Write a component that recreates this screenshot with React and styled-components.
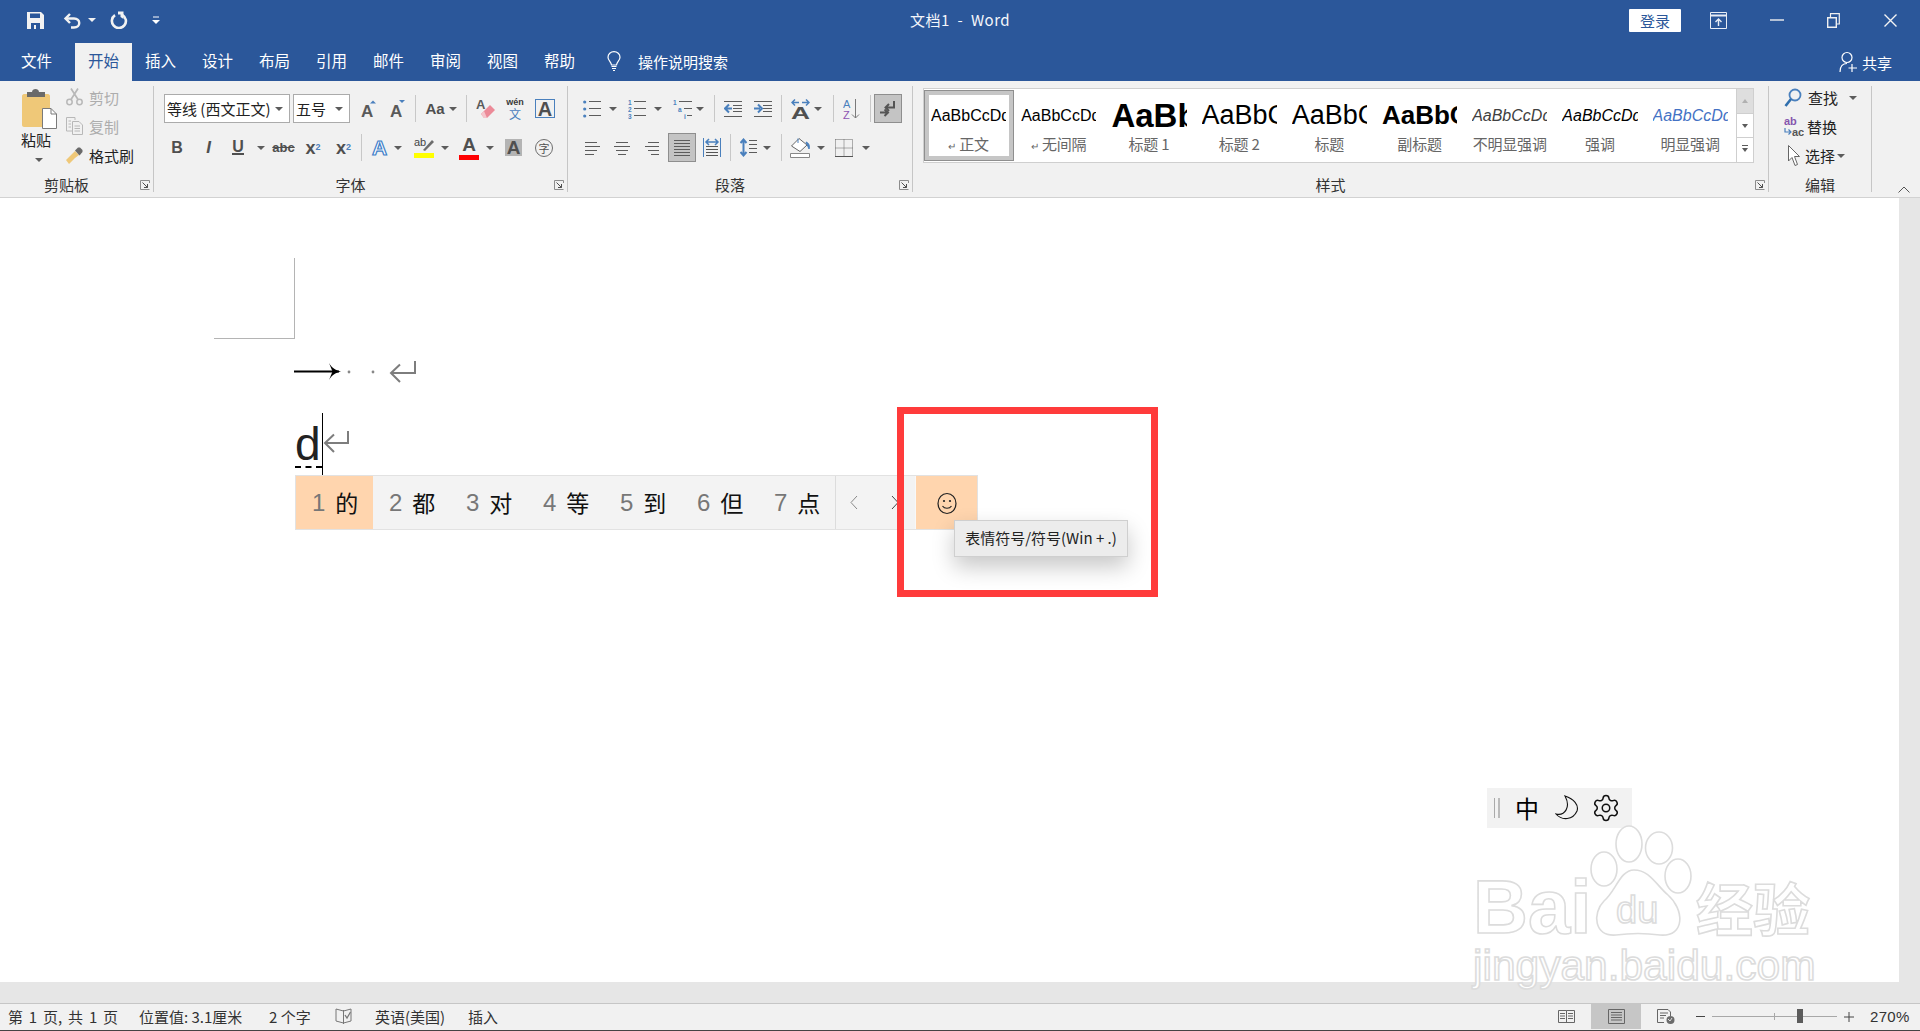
import React from 'react';
import styled, { createGlobalStyle } from 'styled-components';
import { Settings } from 'lucide-react';

const CJK = '"Noto Sans CJK SC", "Liberation Sans", sans-serif';
const LATIN = '"Liberation Sans", "Noto Sans CJK SC", sans-serif';
const BLUE = '#2b579a';
const ICON_BLUE = '#4a80bd';
const GRAY = '#5c5c5c';

const GlobalStyle = createGlobalStyle`
  html, body { margin: 0; padding: 0; height: 100%; overflow: hidden; background: #fff; }
  body { font-family: ${CJK}; }
  svg { display: block; }
`;

const Shell = styled.div`
  position: relative;
  width: 1920px;
  height: 1031px;
  display: flex;
  flex-direction: column;
  overflow: hidden;
`;

/* title bar */
const TitleBar = styled.div`
  height: 40px;
  box-sizing: border-box;
  background: ${BLUE};
  display: grid;
  grid-template-columns: 1fr auto 1fr;
  align-items: center;
  color: #fff;
`;
const Qat = styled.div`
  display: flex;
  align-items: center;
  padding-left: 27px;
`;
const WindowTitle = styled.div`
  margin-bottom: 2px;
  font-size: 15px;
  letter-spacing: 0.5px;
  color: #f4f6fa;
  white-space: pre;
`;
const WinButtons = styled.div`
  display: flex;
  align-items: center;
  justify-content: flex-end;
  padding-right: 23px;
`;
const SignIn = styled.div`
  width: 52px;
  height: 23px;
  margin-right: 29px;
  background: #fff;
  border-radius: 1px;
  color: ${BLUE};
  font-size: 15px;
  line-height: 23px;
  text-align: center;
`;
const Gap = styled.div`
  margin-left: ${p => p.$ml || 0}px;
  display: flex;
`;

/* tabs */
const TabBar = styled.div`
  height: 41px;
  background: ${BLUE};
  display: flex;
  align-items: flex-end;
  padding-left: 8px;
  color: #fff;
`;
const Tab = styled.div`
  width: 57px;
  height: 38px;
  margin-right: ${p => p.$mr || 0}px;
  line-height: 35px;
  text-align: center;
  font-size: 15.5px;
  background: ${p => (p.$active ? '#f1f1f1' : 'transparent')};
  color: ${p => (p.$active ? BLUE : '#fff')};
`;
const TellMe = styled.div`
  height: 36px;
  margin-bottom: 2px;
  display: flex;
  align-items: center;
  gap: 17px;
  margin-left: 19px;
  font-size: 15px;
`;
const Share = styled.div`
  height: 38px;
  margin-left: auto;
  margin-right: 28px;
  display: flex;
  align-items: center;
  gap: 4px;
  font-size: 15px;
`;

/* ribbon */
const Ribbon = styled.div`
  position: relative;
  height: 117px;
  box-sizing: border-box;
  background: #f1f1f1;
  border-bottom: 1px solid #d2d2d2;
  display: flex;
  align-items: flex-start;
`;
const Group = styled.div`
  position: relative;
  width: ${p => p.$w}px;
  height: 106px;
  margin-top: 5px;
  box-sizing: border-box;
  border-right: 1px solid #c6c6c6;
  display: flex;
  flex-direction: column;
  justify-content: space-between;
`;
const GroupLabel = styled.div`
  height: 14px;
  line-height: 14px;
  padding-right: ${p => (p.$flat ? 0 : 20)}px;
  text-align: center;
  font-size: 15px;
  color: #333;
`;
const Launcher = styled.div`
  position: absolute;
  right: 3px;
  bottom: 2px;
`;
const ToolRows = styled.div`
  display: flex;
  flex-direction: column;
  gap: 10px;
  padding-top: 8px;
`;
const ToolRow = styled.div`
  height: 29px;
  display: flex;
  align-items: center;
  padding-left: ${p => p.$pl}px;
`;
const Tool = styled.div`
  flex: none;
  width: ${p => p.$w}px;
  margin-left: ${p => p.$ml || 0}px;
  display: flex;
  align-items: center;
  justify-content: center;
  color: ${p => p.$color || '#4f4f4f'};
  font-family: ${LATIN};
  font-size: ${p => p.$fs || 18}px;
  font-weight: ${p => (p.$bold ? 700 : 400)};
  font-style: ${p => (p.$italic ? 'italic' : 'normal')};
  line-height: 1;
`;
const ActiveTool = styled(Tool)`
  height: 29px;
  box-sizing: border-box;
  background: #c4c4c4;
  border: 1px solid #8e8e8e;
`;
const Caret = styled.span`
  flex: none;
  width: 0;
  height: 0;
  margin-left: ${p => p.$ml || 0}px;
  border-left: 4px solid transparent;
  border-right: 4px solid transparent;
  border-top: 4px solid ${p => p.$color || GRAY};
`;
const Sep = styled.span`
  flex: none;
  width: 1px;
  height: 27px;
  margin-left: ${p => p.$ml || 0}px;
  background: #c8c8c8;
`;
const ComboBox = styled.div`
  flex: none;
  width: ${p => p.$w}px;
  height: 29px;
  margin-left: ${p => p.$ml || 0}px;
  box-sizing: border-box;
  border: 1px solid #ababab;
  background: #fff;
  display: flex;
  align-items: center;
  justify-content: space-between;
  padding: 0 6px 0 2px;
  font-size: 15px;
  color: #222;
  white-space: nowrap;
`;
const UnderU = styled.span`
  border-bottom: 2px solid #4f4f4f;
  line-height: 13px;
`;
const ColorBar = styled.div`
  display: flex;
  flex-direction: column;
  align-items: center;
  width: 100%;
`;
const Swatch = styled.span`
  width: 100%;
  height: 5px;
  margin-top: 1px;
  background: ${p => p.$color};
`;
const Shaded = styled.span`
  width: 17px;
  height: 17px;
  background: #b4b4b4;
  font-size: 19px;
  font-weight: 700;
  line-height: 18px;
  text-align: center;
`;
const BoxedA = styled.span`
  width: 18px;
  height: 17px;
  border: 1px solid ${ICON_BLUE};
  font-size: 20px;
  line-height: 18px;
  font-weight: 700;
  text-align: center;
`;
const SmallSub = styled.sub`
  font-size: 9px;
  color: ${ICON_BLUE};
  vertical-align: -3px;
`;
const SmallSup = styled.sup`
  font-size: 9px;
  color: ${ICON_BLUE};
  vertical-align: 7px;
`;
const Strike = styled.span`
  text-decoration: line-through;
  font-size: 13px;
  font-weight: 700;
`;
const CircleChar = styled.span`
  width: 16px;
  height: 16px;
  border: 1px solid #6e6e6e;
  border-radius: 50%;
  font-family: ${CJK};
  font-size: 11px;
  line-height: 16px;
  text-align: center;
`;
const Wen = styled.div`
  display: flex;
  flex-direction: column;
  align-items: center;
  font-size: 9px;
  color: #3a3a3a;
  line-height: 9px;
  font-weight: 700;
`;
const WenChar = styled.span`
  font-family: ${CJK};
  font-size: 12px;
  line-height: 13px;
  font-weight: 400;
  color: ${ICON_BLUE};
`;

/* clipboard */
const ClipBody = styled.div`
  display: flex;
  padding-left: 21px;
`;
const PasteColumn = styled.div`
  width: 36px;
  padding-top: 3px;
  display: flex;
  flex-direction: column;
  align-items: center;
  font-size: 15px;
  color: #222;
`;
const PasteLabel = styled.span`
  line-height: 15px;
  margin: 3px 6px 11px 0;
`;
const ClipList = styled.div`
  margin-left: 9px;
  padding-top: 2px;
  display: flex;
  flex-direction: column;
  gap: 11px;
`;
const ClipItem = styled.div`
  height: 18px;
  display: flex;
  align-items: center;
  gap: 6px;
  font-size: 15px;
  color: ${p => (p.$disabled ? '#adadad' : '#222')};
  white-space: nowrap;
`;

/* styles gallery */
const Gallery = styled.div`
  margin: 2px 0 0 10px;
  width: 831px;
  height: 75px;
  box-sizing: border-box;
  border: 1px solid #cfcfcf;
  background: #fff;
  display: flex;
`;
const StyleItem = styled.div`
  flex: none;
  width: 90.2px;
  height: 71px;
  margin-top: 1px;
  box-sizing: border-box;
  overflow: hidden;
  border: ${p => (p.$selected ? '1px solid #8f8f8f' : '0')};
  box-shadow: ${p => (p.$selected ? 'inset 0 0 0 4px #c6c6c6' : 'none')};
  padding: ${p => (p.$selected ? '0 7px 0 6px' : '1px 8px 0 7px')};
  display: flex;
  flex-direction: column;
`;
const Sample = styled.div`
  height: 49px;
  flex: none;
  line-height: 49px;
  overflow: hidden;
  white-space: nowrap;
  font-family: ${LATIN};
  font-size: ${p => p.$size}px;
  font-weight: ${p => (p.$bold ? 700 : 400)};
  font-style: ${p => (p.$italic ? 'italic' : 'normal')};
  color: ${p => p.$color || '#000'};
`;
const StyleLabel = styled.div`
  height: 18px;
  margin-top: -5px;
  line-height: 18px;
  text-align: center;
  font-size: 15px;
  letter-spacing: -0.2px;
  color: #666;
  white-space: nowrap;
`;
const ReturnSmall = styled.span`
  font-size: 10px;
  margin-right: 3px;
`;
const GalleryScroll = styled.div`
  margin-left: auto;
  width: 18px;
  display: flex;
  flex-direction: column;
  border-left: 1px solid #cfcfcf;
`;
const ScrollBtn = styled.div`
  flex: 1;
  display: flex;
  align-items: center;
  justify-content: center;
  background: ${p => (p.$off ? '#dedede' : '#fff')};
  border-bottom: ${p => (p.$last ? '0' : '1px solid #cfcfcf')};
`;
const UpCaret = styled.span`
  border-left: 3px solid transparent;
  border-right: 3px solid transparent;
  border-bottom: 4px solid #b0b0b0;
`;
const DownCaret = styled.span`
  border-left: 3px solid transparent;
  border-right: 3px solid transparent;
  border-top: 4px solid ${GRAY};
`;
const MoreCaret = styled(DownCaret)`
  position: relative;
  &::before {
    content: '';
    position: absolute;
    left: -3px;
    top: -7px;
    width: 6px;
    height: 1px;
    background: ${GRAY};
  }
`;

/* editing */
const EditList = styled.div`
  padding: 2px 0 0 15px;
  display: flex;
  flex-direction: column;
  gap: 10px;
`;
const EditItem = styled.div`
  height: 19px;
  display: flex;
  align-items: center;
  gap: ${p => p.$gap || 6}px;
  font-size: 15px;
  color: #222;
  white-space: nowrap;
`;
const Collapse = styled.div`
  position: absolute;
  right: 10px;
  bottom: 4px;
`;

/* document */
const DocArea = styled.div`
  flex: 1;
  display: flex;
  min-height: 0;
`;
const DocPage = styled.div`
  position: relative;
  flex: 1;
  background: #fff;
  padding: 60px 0 0 214px;
`;
const ScrollTrack = styled.div`
  width: 21px;
  background: #e6e6e6;
`;
const CornerMark = styled.div`
  width: 80px;
  height: 80px;
  border-right: 1px solid #b4b4b4;
  border-bottom: 1px solid #b4b4b4;
`;
const MarksLine = styled.div`
  margin: 21px 0 0 80px;
  height: 22px;
`;
const TypingLine = styled.div`
  margin: 31px 0 0 81px;
  height: 62px;
  display: flex;
  align-items: flex-start;
`;
const Composition = styled.div`
  width: 27px;
  height: 53px;
  border-bottom: 2px dashed #000;
  font-family: ${LATIN};
  font-size: 46px;
  line-height: 62px;
  color: #222;
`;
const TextCursor = styled.div`
  width: 1px;
  height: 62px;
  background: #000;
`;
const ReturnMark = styled.div`
  margin-top: 17px;
`;
const CandidateBar = styled.div`
  position: relative;
  margin-left: 81px;
  width: 683px;
  height: 55px;
  box-sizing: border-box;
  background: #f3f3f3;
  border: 1px solid #e2e2e2;
  display: flex;
`;
const Candidate = styled.div`
  width: 77px;
  box-sizing: border-box;
  padding-left: 16px;
  display: flex;
  align-items: center;
  gap: 10px;
  font-size: 23px;
  color: #111;
  background: ${p => (p.$active ? '#ffd5ae' : 'transparent')};
`;
const CandNum = styled.span`
  font-family: ${LATIN};
  font-size: 24px;
  color: #777;
`;
const CandChar = styled.span`
  margin-top: -2px;
`;
const PagerCell = styled.div`
  width: 81px;
  box-sizing: border-box;
  border-left: 1px solid #dcdcdc;
  border-right: 1px solid #f8f8f8;
  padding: 0 16px 0 14px;
  display: flex;
  align-items: center;
  justify-content: space-between;
`;
const EmojiCell = styled.div`
  position: relative;
  flex: 1;
  padding-top: 1px;
  background: #ffd5ae;
  display: flex;
  align-items: center;
  justify-content: center;
`;
const Tooltip = styled.div`
  position: absolute;
  left: 38px;
  top: 44px;
  width: 174px;
  height: 37px;
  box-sizing: border-box;
  background: #ececec;
  border: 1px solid #cfcfcf;
  box-shadow: 0 10px 22px rgba(0, 0, 0, 0.22);
  font-size: 15px;
  line-height: 33px;
  text-align: center;
  color: #222;
  white-space: nowrap;
  z-index: 3;
`;
const RedBox = styled.div`
  position: absolute;
  left: 897px;
  top: 209px;
  width: 261px;
  height: 190px;
  box-sizing: border-box;
  border: 7px solid #ff3b3b;
  pointer-events: none;
  z-index: 2;
`;
const ImeBar = styled.div`
  position: absolute;
  left: 1487px;
  top: 590px;
  width: 145px;
  height: 40px;
  background: #f2f2f2;
  display: flex;
  align-items: center;
  padding-left: 7px;
  box-sizing: border-box;
`;
const ImeGrip = styled.div`
  width: 3px;
  height: 20px;
  border-left: 1px solid #aaa;
  border-right: 2px solid #bbb;
`;
const ImeChar = styled.div`
  margin-left: 15px;
  font-size: 24px;
  line-height: 40px;
  color: #000;
`;
const ImeIcon = styled.div`
  margin-left: ${p => p.$ml}px;
`;
const Watermark = styled.svg`
  position: absolute;
  left: 1470px;
  top: 825px;
  pointer-events: none;
`;
const WmText = styled.text`
  fill: #fff;
  stroke: #dcdcdc;
  stroke-width: 1.6px;
`;

/* bottom */
const BottomStrip = styled.div`
  height: 21px;
  background: #e6e6e6;
`;
const StatusBar = styled.div`
  height: 28px;
  box-sizing: border-box;
  background: #f1f1f1;
  border-top: 1px solid #c6c6c6;
  border-bottom: 1px solid #444;
  display: flex;
  align-items: center;
  padding: 0 0 1px 8px;
  font-size: 15px;
  color: #333;
  white-space: nowrap;
`;
const StatusItem = styled.span`
  width: ${p => p.$w}px;
  flex: none;
  word-spacing: ${p => p.$ws || 0}px;
`;
const StatusRight = styled.div`
  margin-left: auto;
  height: 100%;
  display: flex;
  align-items: center;
`;
const ViewBtn = styled.div`
  width: 50px;
  height: 100%;
  display: flex;
  align-items: center;
  justify-content: center;
  background: ${p => (p.$active ? '#c6c6c6' : 'transparent')};
`;
const Zoom = styled.div`
  display: flex;
  align-items: center;
  margin-left: 5px;
`;
const ZoomTrack = styled.div`
  position: relative;
  width: 125px;
  height: 1px;
  margin: 0 7px;
  background: #a8a8a8;
`;
const ZoomTick = styled.span`
  position: absolute;
  left: 62px;
  top: -3px;
  width: 1px;
  height: 7px;
  background: #a8a8a8;
`;
const ZoomThumb = styled.span`
  position: absolute;
  left: 85px;
  top: -7px;
  width: 6px;
  height: 14px;
  background: #5c5c5c;
`;
const ZoomPct = styled.span`
  width: 50px;
  margin-left: 16px;
  font-family: ${LATIN};
  font-size: 15px;
  letter-spacing: 0.3px;
`;

/* small drawings */
const Svg = ({ w, h, children, ...rest }) => (
  <svg width={w} height={h} viewBox={`0 0 ${w} ${h}`} fill="none" {...rest}>{children}</svg>
);

const Lines = ({ rows, x1, x2, color = GRAY }) => rows.map(y => (
  <path key={y} d={`M${x1} ${y}.5H${x2}`} stroke={color} />
));

const SaveIcon = () => (
  <Svg w={17} h={17}>
    <path d="M0 0H14L17 3V17H0Z" fill="#f2f2f2" />
    <path d="M3 1.5H13V6H3Z" fill={BLUE} />
    <path d="M4 11H13V17H4Z" fill={BLUE} />
    <path d="M7 13H9V17H7Z" fill="#f2f2f2" />
  </Svg>
);
const UndoIcon = () => (
  <Svg w={18} h={17}>
    <path d="M7 2L2.5 6.5L7 11" stroke="#f2f2f2" strokeWidth="2.4" />
    <path d="M3 6.5H11C18 6.5 18 15.5 11 15.5H8" stroke="#f2f2f2" strokeWidth="2.4" />
  </Svg>
);
const RedoIcon = () => (
  <Svg w={18} h={18}>
    <path d="M5 4.2A7 7 0 1 0 12.5 4" stroke="#f2f2f2" strokeWidth="2.6" />
    <path d="M8 0.5H13.5V8L10.5 6V3.5H8Z" fill="#f2f2f2" />
  </Svg>
);
const QatMore = () => (
  <Svg w={8} h={9}>
    <path d="M1 1H7" stroke="#fff" />
    <path d="M0 4H8L4 8Z" fill="#fff" />
  </Svg>
);
const RibbonDisplay = () => (
  <Svg w={17} h={17}>
    <path d="M.5 .5H16.5V16.5H.5Z" stroke="#e8edf5" />
    <path d="M0 3.5H17" stroke="#e8edf5" strokeWidth="2" />
    <path d="M8.5 14V7M5.5 10L8.5 7L11.5 10" stroke="#e8edf5" strokeWidth="1.4" />
  </Svg>
);
const MinIcon = () => <Svg w={14} h={2}><path d="M0 1H14" stroke="#f0f0f0" strokeWidth="1.4" /></Svg>;
const RestoreIcon = () => (
  <Svg w={13} h={15}>
    <path d="M.7 4.7H9.3V14.3H.7Z" stroke="#f0f0f0" strokeWidth="1.4" />
    <path d="M3.5 4V.7H12.3V11H9.5" stroke="#f0f0f0" strokeWidth="1.2" />
  </Svg>
);
const CloseIcon = () => (
  <Svg w={13} h={13}><path d="M.5 .5L12.5 12.5M12.5 .5L.5 12.5" stroke="#f4f4f4" strokeWidth="1.4" /></Svg>
);
const BulbIcon = () => (
  <Svg w={14} h={20}>
    <path d="M4.5 14C4 10.5 1 9.5 1 6.2A6 5.5 0 0 1 13 6.2C13 9.5 10 10.5 9.5 14Z" stroke="#fff" strokeWidth="1.2" />
    <path d="M4.5 15.5H9.5M5 17.5H9M6 19.5H8" stroke="#fff" />
  </Svg>
);
const PersonPlus = () => (
  <Svg w={19} h={22}>
    <circle cx="8" cy="6.5" r="5" stroke="#fff" strokeWidth="1.2" />
    <path d="M1 21C1 15 4 12.5 8 12.5" stroke="#fff" strokeWidth="1.2" />
    <path d="M13 13V21M9.5 17H18" stroke="#fff" strokeWidth="1.2" />
  </Svg>
);
const PasteIcon = () => (
  <Svg w={35} h={40}>
    <path d="M2 5H26C27 5 28 6 28 7V36C28 37 27 38 26 38H2C1 38 0 37 0 36V7C0 6 1 5 2 5Z" fill="#efc878" />
    <path d="M5 3H10C10 -1 17 -1 17 3H23V8H5Z" fill="#6a6a6a" />
    <path d="M20.5 19.5H29L34.5 25V39.5H20.5Z" fill="#fff" stroke="#7a7a7a" />
    <path d="M29 19.5V25H34.5" stroke="#7a7a7a" />
  </Svg>
);
const CutIcon = () => (
  <Svg w={17} h={18}>
    <circle cx="3.5" cy="14" r="2.7" stroke="#b8b8b8" strokeWidth="1.5" />
    <circle cx="13.5" cy="14" r="2.7" stroke="#b8b8b8" strokeWidth="1.5" />
    <path d="M5 11.5L12 .5M12 11.5L5 .5" stroke="#b8b8b8" strokeWidth="1.7" />
  </Svg>
);
const CopyIcon = () => (
  <Svg w={17} h={18}>
    <path d="M.5 .5H9V3M.5 .5V14H6" stroke="#b8b8b8" />
    <path d="M6.5 4.5H13L16.5 8V17.5H6.5Z" stroke="#b8b8b8" fill="#f1f1f1" />
    <path d="M8.5 9H14M8.5 11.5H14M8.5 14H14M2.5 4H5M2.5 7H5M2.5 10H5" stroke="#b8b8b8" />
  </Svg>
);
const BrushIcon = () => (
  <Svg w={17} h={17}>
    <path d="M9 4L13 8L9 11L3 17L0 13Z" fill="#efc878" />
    <path d="M9 3.5L12 .5H14L16.5 3V5L13.5 8.5Z" fill="#6a6a6a" />
  </Svg>
);
const LauncherIcon = () => (
  <Svg w={10} h={10}>
    <path d="M9.5 9.5H.5V.5H9.5V3" stroke="#8c8c8c" />
    <path d="M2.5 2.5L7.5 7.5M4 7.5H7.5V4" stroke="#4e4e4e" />
  </Svg>
);
const GrowA = ({ down }) => (
  <Svg w={15} h={18}>
    <text x="0" y="17" fontFamily="Liberation Sans" fontSize="17" fontWeight="700" fill="#5a5a5a">A</text>
    <path d={down ? 'M9 0H15L12 3Z' : 'M9 3.5H15L12 .5Z'} fill={ICON_BLUE} />
  </Svg>
);
const EraserIcon = () => (
  <Svg w={20} h={22}>
    <text x="0" y="11" fontFamily="Liberation Sans" fontSize="13" fontWeight="700" fill="#5a5a5a">A</text>
    <path d="M5 16L14 7L19 12L11 20H8Z" fill="#ec8a98" />
    <path d="M5 16L8 20H11L8 13Z" fill="#f5c5cc" />
  </Svg>
);
const TextEffectA = () => (
  <Svg w={18} h={22}>
    <text x="1" y="18" fontFamily="Liberation Sans" fontSize="21" fontWeight="700" fill="#fff" stroke="#3f80c9" strokeWidth="1.2">A</text>
  </Svg>
);
const HighlightPen = () => (
  <Svg w={20} h={15}>
    <text x="0" y="9" fontFamily="Liberation Sans" fontSize="11" fill="#444">ab</text>
    <path d="M9 13L18 3L20 5L11 14Z" fill="#6d6d6d" />
  </Svg>
);
const BulletList = () => (
  <Svg w={18} h={18}>
    {[2, 9, 16].map(y => <circle key={y} cx="1.7" cy={y} r="1.6" fill={ICON_BLUE} />)}
    <Lines rows={[1, 8, 15]} x1={6} x2={18} />
  </Svg>
);
const NumList = () => (
  <Svg w={18} h={20}>
    {['1', '2', '3'].map((n, i) => (
      <text key={n} x="0" y={6 + i * 7} fontFamily="Liberation Sans" fontSize="6.5" fontWeight="700" fill={ICON_BLUE}>{n}</text>
    ))}
    <Lines rows={[2, 9, 16]} x1={6} x2={18} />
  </Svg>
);
const MultiList = () => (
  <Svg w={19} h={20}>
    <text x="0" y="6" fontFamily="Liberation Sans" fontSize="6.5" fontWeight="700" fill={ICON_BLUE}>1</text>
    <text x="5" y="13" fontFamily="Liberation Sans" fontSize="6.5" fontWeight="700" fill={ICON_BLUE}>a</text>
    <text x="11" y="20" fontFamily="Liberation Sans" fontSize="6.5" fontWeight="700" fill={ICON_BLUE}>i</text>
    <path d="M6 2.5H19M11 9.5H19M14 16.5H19" stroke={GRAY} />
  </Svg>
);
const IndentIcon = ({ right }) => (
  <Svg w={18} h={16}>
    <Lines rows={[0, 15]} x1={0} x2={18} />
    <Lines rows={[4, 7, 10]} x1={9} x2={18} />
    <path d={right ? 'M0 7.5H6M4 3.5L8 7.5L4 11.5' : 'M8 7.5H2M5 3.5L1 7.5L5 11.5'} stroke={ICON_BLUE} strokeWidth="2" />
  </Svg>
);
const DirectionA = () => (
  <Svg w={19} h={20}>
    <path d="M1 3.5H8M4 .5L1 3.5L4 6.5M11 3.5H18M15 .5L18 3.5L15 6.5" stroke={ICON_BLUE} strokeWidth="1.5" />
    <text x="0" y="19.5" fontFamily="Liberation Sans" fontSize="17" fontWeight="700" fill="#505050" textLength="19" lengthAdjust="spacingAndGlyphs">A</text>
  </Svg>
);
const SortIcon = () => (
  <Svg w={17} h={20}>
    <text x="0" y="9" fontFamily="Liberation Sans" fontSize="11" fill={ICON_BLUE}>A</text>
    <text x="0" y="20" fontFamily="Liberation Sans" fontSize="11" fill="#8d55b3">Z</text>
    <path d="M12.5 0V19M9 15.5L12.5 19L16 15.5" stroke="#7a7a7a" />
  </Svg>
);
const PilcrowIcon = () => (
  <Svg w={16} h={16}>
    <path d="M14 0V6.5H6M9 3L5.5 6.5L9 10" stroke="#555" strokeWidth="2" />
    <path d="M0 11.5H7M4.5 8.5L8 11.5L4.5 15" stroke="#555" strokeWidth="2" />
  </Svg>
);
const AlignIcon = ({ kind, w }) => {
  const rows = kind === 'center'
    ? [[2, 14], [0, 16], [2, 14], [4, 12]]
    : kind === 'right'
      ? [[3, 14], [0, 14], [3, 14], [6, 14]]
      : [[0, 12], [0, 15], [0, 12], [0, 9]];
  return (
    <Svg w={w} h={14}>
      {rows.map(([a, b], i) => <path key={i} d={`M${a} ${i * 4 + 1}.5H${b}`} stroke={GRAY} />)}
    </Svg>
  );
};
const JustifyIcon = () => (
  <Svg w={16} h={16}><Lines rows={[0, 3, 6, 9, 12, 15]} x1={0} x2={16} /></Svg>
);
const DistributeIcon = () => (
  <Svg w={18} h={19}>
    <path d="M.5 0V19M17.5 0V19" stroke={ICON_BLUE} />
    <path d="M3 4H15M6 1L3 4L6 7M12 1L15 4L12 7" stroke={ICON_BLUE} strokeWidth="1.5" />
    <Lines rows={[8, 11, 14, 17]} x1={3} x2={15} color="#555" />
  </Svg>
);
const LineSpacing = () => (
  <Svg w={17} h={19}>
    <path d="M3.5 2V17M.5 5L3.5 1.5L6.5 5M.5 14L3.5 17.5L6.5 14" stroke={ICON_BLUE} strokeWidth="2" />
    <Lines rows={[2, 6, 10, 14]} x1={9} x2={17} />
  </Svg>
);
const ShadingIcon = () => (
  <Svg w={20} h={20}>
    <path d="M9 .5L17 7L10 13.5L1.5 8Z" fill="#fff" stroke="#666" />
    <path d="M8 .5V5M16 4C19 5 20 8 19 11Z" stroke={ICON_BLUE} fill={ICON_BLUE} />
    <path d="M.5 15.5H19.5V19.5H.5Z" fill="#fff" stroke="#888" />
  </Svg>
);
const BorderIcon = () => (
  <Svg w={18} h={18}>
    <path d="M.5 .5H17.5V17M.5 .5V17M9 .5V17M.5 9H17.5" stroke="#666" strokeDasharray="1 1" />
    <path d="M0 17.5H18" stroke="#555" />
  </Svg>
);
const FindIcon = () => (
  <Svg w={18} h={20}>
    <circle cx="11" cy="7" r="5.5" stroke={ICON_BLUE} strokeWidth="1.8" />
    <path d="M7 11L1.5 18" stroke="#2f6fad" strokeWidth="2.6" />
  </Svg>
);
const ReplaceIcon = () => (
  <Svg w={20} h={21}>
    <text x="0" y="9" fontFamily="Liberation Sans" fontSize="11" fontWeight="700" fill="#8556ad">ab</text>
    <text x="8" y="20" fontFamily="Liberation Sans" fontSize="11" fontWeight="700" fill="#555">ac</text>
    <path d="M1 12V16H7M4.5 13.5L7 16L4.5 18.5" stroke={ICON_BLUE} strokeWidth="1.2" />
  </Svg>
);
const SelectIcon = () => (
  <Svg w={12} h={21}>
    <path d="M.5 .5V16L4 12.5L7 20.5L9.5 19.5L6.5 11.5H11.5Z" fill="#fff" stroke="#666" />
  </Svg>
);
const FormatMarks = () => (
  <Svg w={122} h={23}>
    <path d="M0 11.5H45" stroke="#000" strokeWidth="2.2" />
    <path d="M35 3C38 8 41 10 47 11.5C41 13 38 15 35 20L38.5 11.5Z" fill="#000" />
    <circle cx="55" cy="12" r="1.4" fill="#888" />
    <circle cx="79" cy="12" r="1.4" fill="#888" />
    <path d="M121 1V13H98M106 4.5L97 13L106 22" stroke="#7d7d7d" strokeWidth="2" />
  </Svg>
);
const ReturnGlyph = () => (
  <Svg w={26} h={24}>
    <path d="M25 1V13H3M11 4.5L2 13L11 22" stroke="#7d7d7d" strokeWidth="2" />
  </Svg>
);
const Chevron = ({ right }) => (
  <Svg w={8} h={15}>
    <path d={right ? 'M1 1L7 7.5L1 14' : 'M7 1L1 7.5L7 14'} stroke={right ? '#444' : '#888'} />
  </Svg>
);
const Smiley = () => (
  <Svg w={20} h={23}>
    <ellipse cx="10" cy="11.5" rx="9" ry="10" stroke="#222" strokeWidth="1.2" />
    <circle cx="7" cy="9" r="1.1" fill="#222" />
    <circle cx="13" cy="9" r="1.1" fill="#222" />
    <path d="M5.5 14C7.5 17 12.5 17 14.5 14" stroke="#222" strokeWidth="1.2" />
  </Svg>
);
const Moon = () => (
  <Svg w={25} h={26}>
    <path d="M10 1C19 4 24 10 22 16C18 25 7 26 1 19C10 21 16 12 10 1Z" stroke="#111" strokeWidth="1.1" />
  </Svg>
);
const ProofIcon = () => (
  <Svg w={17} h={17}>
    <path d="M8.5 2V16M8.5 3L1 1V13L8.5 15L16 13V1L8.5 3Z" stroke="#777" />
    <path d="M10 7L12 10L15.5 4" stroke="#777" strokeWidth="1.3" />
  </Svg>
);
const ReadIcon = () => (
  <Svg w={17} h={14}>
    <path d="M.5 .5H8.5V13M.5 .5V12.5H8.5M8.5 .5H16.5V12.5H8.5" stroke="#666" />
    <path d="M2 3.5H7M2 6H7M2 8.5H7M10 3.5H15M10 6H15M10 8.5H15" stroke="#666" />
  </Svg>
);
const PrintIcon = () => (
  <Svg w={17} h={15}>
    <path d="M.5 .5H16.5V14.5H.5Z" stroke="#666" />
    <path d="M3 3.5H14M3 6H14M3 8.5H14M3 11H14" stroke="#666" />
  </Svg>
);
const WebIcon = () => (
  <Svg w={18} h={15}>
    <path d="M.5 .5H11L13.5 3V7M.5 .5V13.5H7" stroke="#666" />
    <path d="M3 4H11M3 6.5H9M3 9H7" stroke="#666" />
    <circle cx="13.5" cy="11" r="4" fill="#6b6b6b" />
    <path d="M11 10L13 12L15 9" stroke="#ddd" />
  </Svg>
);
const ChevronUp = () => (
  <Svg w={12} h={7}><path d="M.5 6.5L6 1L11.5 6.5" stroke="#555" /></Svg>
);

const styleList = [
  { label: '正文', mark: true, text: 'AaBbCcDd', size: 16, selected: true },
  { label: '无间隔', mark: true, text: 'AaBbCcDd', size: 16 },
  { label: '标题 1', text: 'AaBbC', size: 33, bold: true },
  { label: '标题 2', text: 'AaBbCc', size: 27 },
  { label: '标题', text: 'AaBbCc', size: 27 },
  { label: '副标题', text: 'AaBbCc', size: 26, bold: true },
  { label: '不明显强调', text: 'AaBbCcDd', size: 16, italic: true, color: '#404040' },
  { label: '强调', text: 'AaBbCcDd', size: 16, italic: true },
  { label: '明显强调', text: 'AaBbCcDd', size: 16, italic: true, color: '#4472c4' },
];

const tabs = ['插入', '设计', '布局', '引用', '邮件', '审阅', '视图', '帮助'];
const candidates = ['的', '都', '对', '等', '到', '但', '点'];

const ClipboardGroup = () => (
  <Group $w={154}>
    <ClipBody>
      <PasteColumn>
        <PasteIcon />
        <PasteLabel>粘贴</PasteLabel>
        <Caret />
      </PasteColumn>
      <ClipList>
        <ClipItem $disabled><CutIcon />剪切</ClipItem>
        <ClipItem $disabled><CopyIcon />复制</ClipItem>
        <ClipItem><BrushIcon />格式刷</ClipItem>
      </ClipList>
    </ClipBody>
    <GroupLabel>剪贴板</GroupLabel>
    <Launcher><LauncherIcon /></Launcher>
  </Group>
);

const FontGroup = () => (
  <Group $w={414}>
    <ToolRows>
      <ToolRow $pl={10}>
        <ComboBox $w={126}>等线 (西文正文)<Caret /></ComboBox>
        <ComboBox $w={57} $ml={3}>五号<Caret /></ComboBox>
        <Tool $w={15} $ml={11}><GrowA /></Tool>
        <Tool $w={15} $ml={14}><GrowA down /></Tool>
        <Sep $ml={10} />
        <Tool $w={18} $ml={10} $fs={15} $bold>Aa</Tool>
        <Caret $ml={5} />
        <Sep $ml={9} />
        <Tool $w={20} $ml={9}><EraserIcon /></Tool>
        <Tool $w={16} $ml={11}>
          <Wen>wén<WenChar>文</WenChar></Wen>
        </Tool>
        <Tool $w={20} $ml={12}><BoxedA>A</BoxedA></Tool>
      </ToolRow>
      <ToolRow $pl={18}>
        <Tool $w={10} $bold $fs={16}>B</Tool>
        <Tool $w={7} $ml={23} $italic $bold $fs={17}>I</Tool>
        <Tool $w={10} $ml={21} $bold $fs={16}><UnderU>U</UnderU></Tool>
        <Caret $ml={14} />
        <Tool $w={21} $ml={8}><Strike>abc</Strike></Tool>
        <Tool $w={14} $ml={12} $bold $fs={18}>x<SmallSub>2</SmallSub></Tool>
        <Tool $w={15} $ml={16} $bold $fs={18}>x<SmallSup>2</SmallSup></Tool>
        <Sep $ml={10} />
        <Tool $w={18} $ml={9}><TextEffectA /></Tool>
        <Caret $ml={5} />
        <Tool $w={20} $ml={12}>
          <ColorBar><HighlightPen /><Swatch $color="#ffff00" /></ColorBar>
        </Tool>
        <Caret $ml={7} />
        <Tool $w={20} $ml={10} $bold $fs={19}>
          <ColorBar>A<Swatch $color="#ff0000" /></ColorBar>
        </Tool>
        <Caret $ml={7} />
        <Tool $w={17} $ml={11}><Shaded>A</Shaded></Tool>
        <Tool $w={18} $ml={13}><CircleChar>字</CircleChar></Tool>
      </ToolRow>
    </ToolRows>
    <GroupLabel>字体</GroupLabel>
    <Launcher><LauncherIcon /></Launcher>
  </Group>
);

const ParagraphGroup = () => (
  <Group $w={345}>
    <ToolRows>
      <ToolRow $pl={15}>
        <Tool $w={18}><BulletList /></Tool>
        <Caret $ml={8} />
        <Tool $w={18} $ml={11}><NumList /></Tool>
        <Caret $ml={8} />
        <Tool $w={19} $ml={11}><MultiList /></Tool>
        <Caret $ml={4} />
        <Sep $ml={10} />
        <Tool $w={18} $ml={9}><IndentIcon /></Tool>
        <Tool $w={18} $ml={12}><IndentIcon right /></Tool>
        <Sep $ml={9} />
        <Tool $w={19} $ml={9}><DirectionA /></Tool>
        <Caret $ml={4} />
        <Sep $ml={11} />
        <Tool $w={17} $ml={9}><SortIcon /></Tool>
        <Sep $ml={10} />
        <ActiveTool $w={28} $ml={3}><PilcrowIcon /></ActiveTool>
      </ToolRow>
      <ToolRow $pl={17}>
        <Tool $w={15}><AlignIcon kind="left" w={15} /></Tool>
        <Tool $w={16} $ml={14}><AlignIcon kind="center" w={16} /></Tool>
        <Tool $w={14} $ml={15}><AlignIcon kind="right" w={14} /></Tool>
        <ActiveTool $w={28} $ml={9}><JustifyIcon /></ActiveTool>
        <Tool $w={18} $ml={7}><DistributeIcon /></Tool>
        <Sep $ml={9} />
        <Tool $w={17} $ml={9}><LineSpacing /></Tool>
        <Caret $ml={6} />
        <Sep $ml={10} />
        <Tool $w={20} $ml={8}><ShadingIcon /></Tool>
        <Caret $ml={7} />
        <Tool $w={18} $ml={10}><BorderIcon /></Tool>
        <Caret $ml={9} />
      </ToolRow>
    </ToolRows>
    <GroupLabel>段落</GroupLabel>
    <Launcher><LauncherIcon /></Launcher>
  </Group>
);

const StylesGroup = () => (
  <Group $w={856}>
    <Gallery>
      {styleList.map(s => (
        <StyleItem key={s.label} $selected={s.selected}>
          <Sample $size={s.size} $bold={s.bold} $italic={s.italic} $color={s.color}>{s.text}</Sample>
          <StyleLabel>{s.mark && <ReturnSmall>↵</ReturnSmall>}{s.label}</StyleLabel>
        </StyleItem>
      ))}
      <GalleryScroll>
        <ScrollBtn $off><UpCaret /></ScrollBtn>
        <ScrollBtn><DownCaret /></ScrollBtn>
        <ScrollBtn $last><MoreCaret /></ScrollBtn>
      </GalleryScroll>
    </Gallery>
    <GroupLabel>样式</GroupLabel>
    <Launcher><LauncherIcon /></Launcher>
  </Group>
);

const EditingGroup = () => (
  <Group $w={103}>
    <EditList>
      <EditItem><FindIcon />查找<Caret $ml={5} /></EditItem>
      <EditItem $gap={3}><ReplaceIcon />替换</EditItem>
      <EditItem $gap={5}><Gap $ml={4}><SelectIcon /></Gap>选择<Caret $ml={-3} /></EditItem>
    </EditList>
    <GroupLabel $flat>编辑</GroupLabel>
  </Group>
);

const App = () => (
  <>
    <GlobalStyle />
    <Shell>
      <TitleBar>
        <Qat>
          <SaveIcon />
          <Gap $ml={19}><UndoIcon /></Gap>
          <Gap $ml={7}><Caret $color="#f2f2f2" /></Gap>
          <Gap $ml={14}><RedoIcon /></Gap>
          <Gap $ml={24}><QatMore /></Gap>
        </Qat>
        <WindowTitle>文档1  -  Word</WindowTitle>
        <WinButtons>
          <SignIn>登录</SignIn>
          <RibbonDisplay />
          <Gap $ml={43}><MinIcon /></Gap>
          <Gap $ml={43}><RestoreIcon /></Gap>
          <Gap $ml={44}><CloseIcon /></Gap>
        </WinButtons>
      </TitleBar>

      <TabBar>
        <Tab $mr={10}>文件</Tab>
        <Tab $active>开始</Tab>
        {tabs.map(t => <Tab key={t}>{t}</Tab>)}
        <TellMe><BulbIcon />操作说明搜索</TellMe>
        <Share><PersonPlus />共享</Share>
      </TabBar>

      <Ribbon>
        <ClipboardGroup />
        <FontGroup />
        <ParagraphGroup />
        <StylesGroup />
        <EditingGroup />
        <Collapse><ChevronUp /></Collapse>
      </Ribbon>

      <DocArea>
        <DocPage>
          <CornerMark />
          <MarksLine><FormatMarks /></MarksLine>
          <TypingLine>
            <Composition>d</Composition>
            <TextCursor />
            <ReturnMark><ReturnGlyph /></ReturnMark>
          </TypingLine>
          <CandidateBar>
            {candidates.map((c, i) => (
              <Candidate key={c} $active={i === 0}>
                <CandNum>{i + 1}</CandNum><CandChar>{c}</CandChar>
              </Candidate>
            ))}
            <PagerCell><Chevron /><Chevron right /></PagerCell>
            <EmojiCell>
              <Smiley />
              <Tooltip>表情符号/符号(Win + .)</Tooltip>
            </EmojiCell>
          </CandidateBar>
          <RedBox />
          <ImeBar>
            <ImeGrip />
            <ImeChar>中</ImeChar>
            <ImeIcon $ml={16}><Moon /></ImeIcon>
            <ImeIcon $ml={11}><Settings size={30} strokeWidth={1.2} color="#111" /></ImeIcon>
          </ImeBar>
        </DocPage>
        <ScrollTrack />
      </DocArea>
      <BottomStrip />

      <StatusBar>
        <StatusItem $w={131} $ws={2.5}>第 1 页, 共 1 页</StatusItem>
        <StatusItem $w={130}>位置值: 3.1厘米</StatusItem>
        <StatusItem $w={66}>2 个字</StatusItem>
        <StatusItem $w={40}><ProofIcon /></StatusItem>
        <StatusItem $w={93}>英语(美国)</StatusItem>
        <StatusItem $w={40}>插入</StatusItem>
        <StatusRight>
          <ViewBtn><ReadIcon /></ViewBtn>
          <ViewBtn $active><PrintIcon /></ViewBtn>
          <ViewBtn><WebIcon /></ViewBtn>
          <Zoom>
            <Svg w={9} h={1}><path d="M0 .5H9" stroke="#444" /></Svg>
            <ZoomTrack><ZoomTick /><ZoomThumb /></ZoomTrack>
            <Svg w={10} h={10}><path d="M0 5H10M5 0V10" stroke="#444" /></Svg>
            <ZoomPct>270%</ZoomPct>
          </Zoom>
        </StatusRight>
      </StatusBar>

      <Watermark width="360" height="170" viewBox="0 0 360 170">
        <g fill="#fff" stroke="#dcdcdc" strokeWidth="1.6">
          <ellipse cx="159" cy="19" rx="13" ry="18" />
          <ellipse cx="189" cy="23" rx="13.5" ry="16" />
          <ellipse cx="134" cy="44" rx="13" ry="17" />
          <ellipse cx="208" cy="51" rx="13" ry="17" />
          <path d="M164 45C180 45 186 60 198 70C214 84 216 112 190 110C176 108 160 108 146 110C124 112 122 88 134 76C146 66 150 45 164 45Z" />
        </g>
        <WmText x="3" y="108" fontFamily="Liberation Sans" fontSize="76" fontWeight="700">Bai</WmText>
        <WmText x="146" y="98" fontFamily="Liberation Sans" fontSize="38">du</WmText>
        <WmText x="226" y="106" fontFamily="Noto Sans CJK SC" fontSize="57" fontWeight="700">经验</WmText>
        <WmText x="3" y="155" fontFamily="Liberation Sans" fontSize="42.5">jingyan.baidu.com</WmText>
      </Watermark>
    </Shell>
  </>
);

export default App;
